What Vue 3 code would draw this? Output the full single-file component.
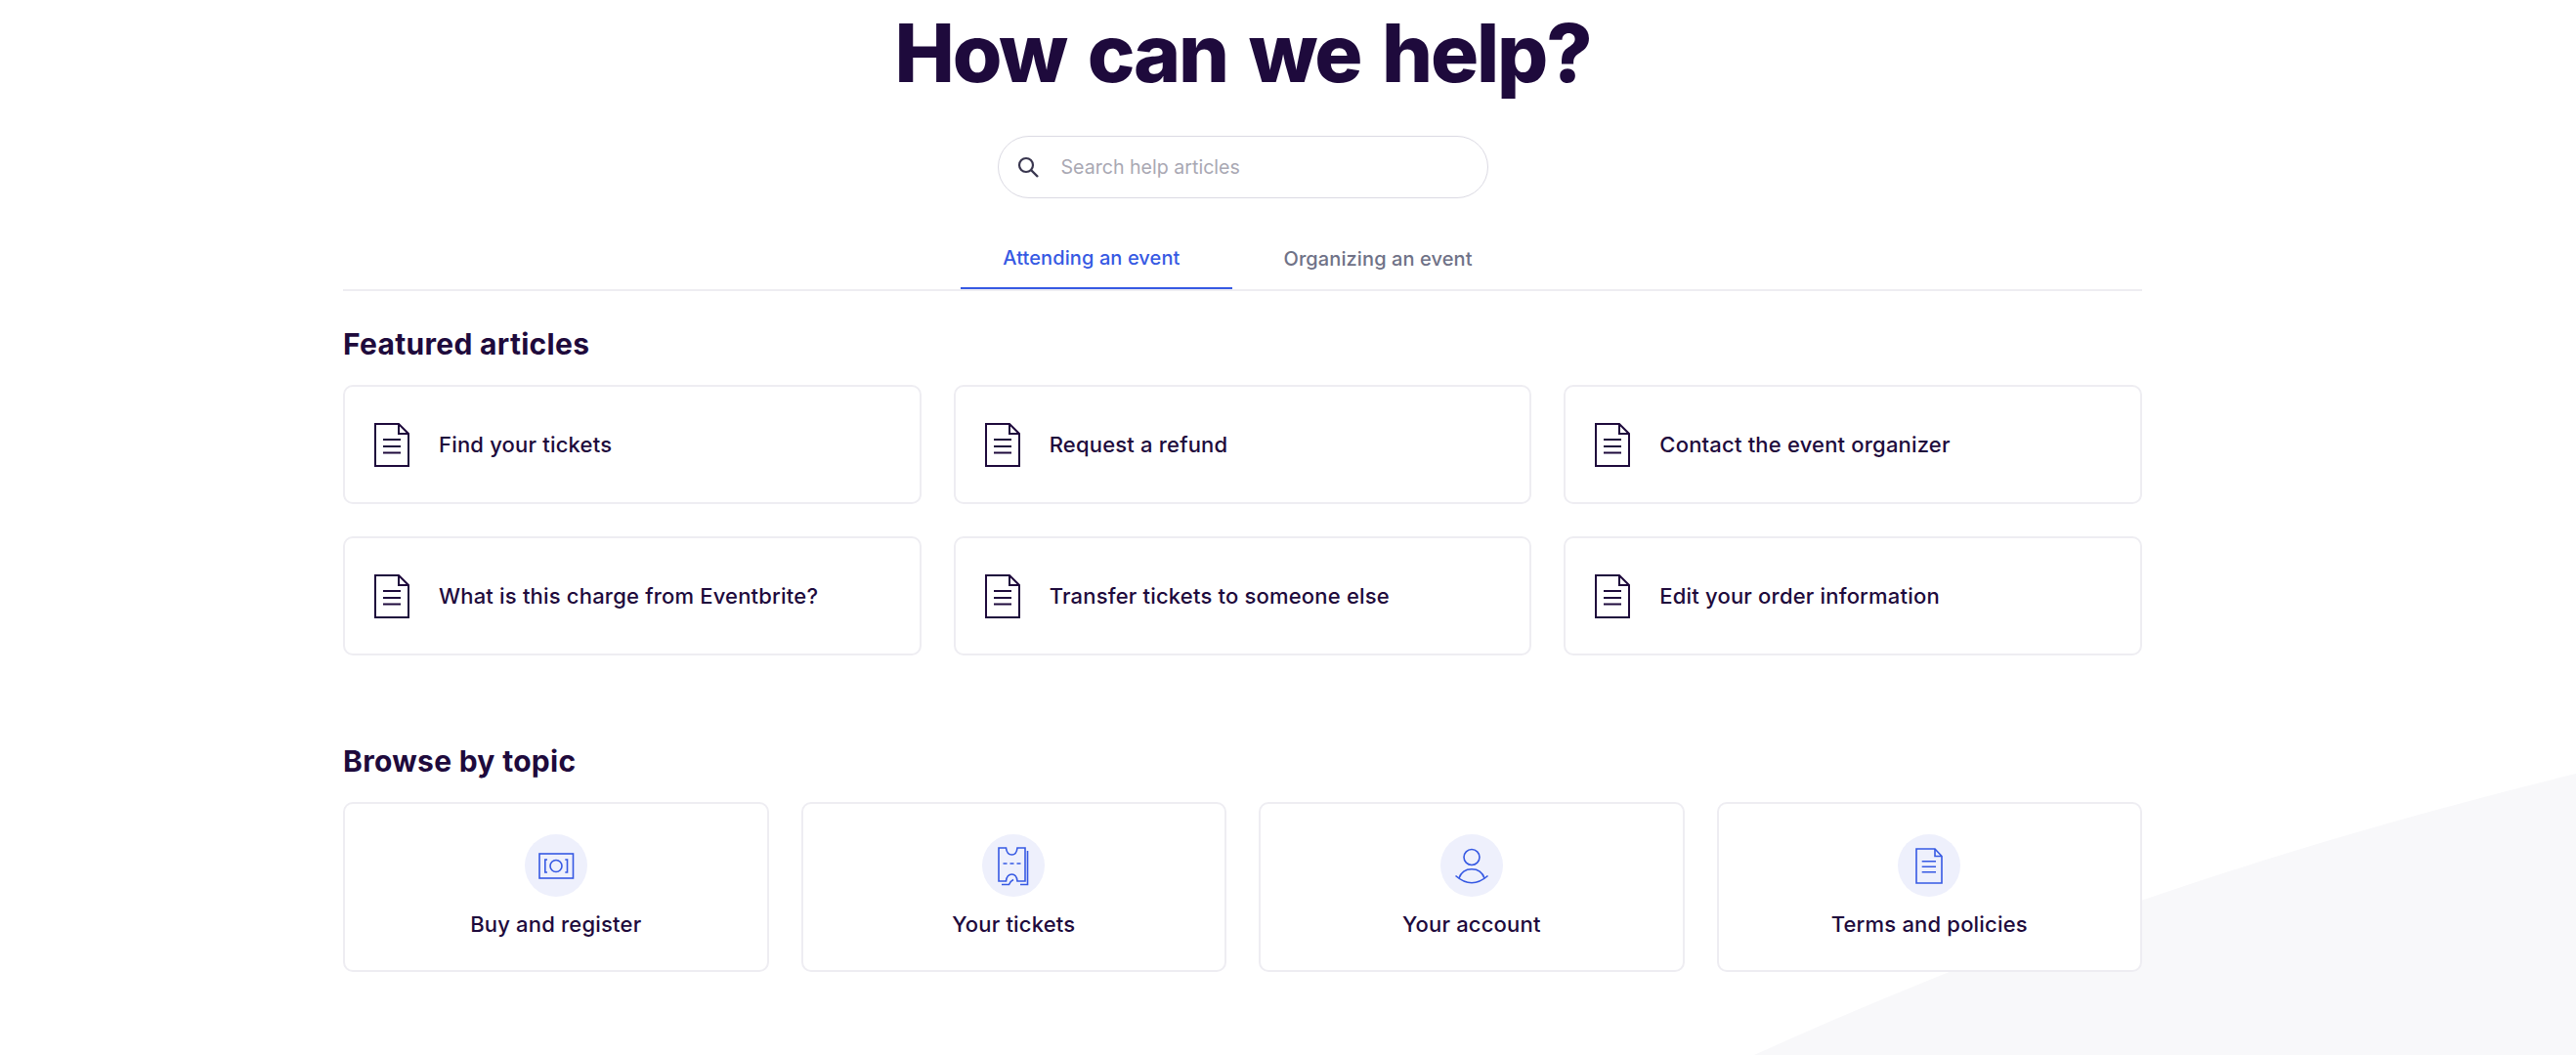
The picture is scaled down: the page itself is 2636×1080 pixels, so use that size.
<script setup>
const featured = [
  'Find your tickets',
  'Request a refund',
  'Contact the event organizer',
  'What is this charge from Eventbrite?',
  'Transfer tickets to someone else',
  'Edit your order information'
]

const topics = [
  { name: 'Buy and register', icon: 'buy' },
  { name: 'Your tickets', icon: 'ticket' },
  { name: 'Your account', icon: 'account' },
  { name: 'Terms and policies', icon: 'terms' }
]
</script>

<template>
  <div class="page">
    <svg class="backdrop" width="2636" height="1080" viewBox="0 0 2636 1080" aria-hidden="true">
      <path d="M1795 1080C2050 965 2300 875 2636 792V1080Z" fill="#f8f8fa" />
    </svg>

    <main class="content">
      <h1 class="title">How can we help?</h1>

      <div class="search">
        <svg class="search-icon" width="24" height="24" viewBox="0 0 24 24">
          <circle cx="10" cy="10" r="7" fill="none" stroke="#39364f" stroke-width="2.2" />
          <path d="M15 15l7 7" fill="none" stroke="#39364f" stroke-width="2.4" />
        </svg>
        <input class="search-input" type="text" placeholder="Search help articles" />
      </div>

      <nav class="tabs">
        <a class="tab tab-active">Attending an event</a>
        <a class="tab tab-second">Organizing an event</a>
      </nav>

      <h2 class="heading heading-featured">Featured articles</h2>
      <div class="featured-grid">
        <a v-for="item in featured" :key="item" class="card featured-card">
          <svg class="doc" width="36" height="45" viewBox="0 0 36 45" fill="none" stroke="#1e0a3c" stroke-width="2">
            <path d="M1 1H25L35 11V44H1Z" />
            <path d="M25 1V11H35" />
            <path d="M9 17H27M9 24H27M9 30.5H27" />
          </svg>
          <span class="card-label">{{ item }}</span>
        </a>
      </div>

      <h2 class="heading heading-browse">Browse by topic</h2>
      <div class="topic-grid">
        <a v-for="topic in topics" :key="topic.name" class="card topic-card">
          <svg class="topic-icon" width="64" height="64" viewBox="0 0 64 64" fill="none" stroke="#3659e3" stroke-width="1.6">
            <circle cx="32" cy="32" r="32" fill="#eef0fc" stroke="none" />
            <template v-if="topic.icon === 'buy'">
              <rect x="15" y="20" width="34.5" height="25" />
              <circle cx="32" cy="32.5" r="6" />
              <path d="M23 26H20.8V39H23M41.3 26H43.5V39H41.3" />
            </template>
            <template v-else-if="topic.icon === 'ticket'">
              <path d="M17 14H24.5C25 18.5 27.5 21 30.5 21C33 21 35.5 18.5 36 14H44V48H36C35.5 43.5 33 41 30.5 41C27.5 41 25 43.5 24.5 48H17Z" />
              <path d="M21.5 30H25.5M28.5 30H32.5M35.5 30H39.5" />
              <path d="M20 51.5H27.5C28.5 49 30 47.5 32 46.5M39 51.5H46.5V17" />
            </template>
            <template v-else-if="topic.icon === 'account'">
              <circle cx="32" cy="23.5" r="8" />
              <path d="M15.5 42.5Q32 57 48.5 42.5" />
              <path d="M19 45C21 39 26 35.7 32 35.7C38 35.7 43 39 45 45" />
            </template>
            <template v-else>
              <path d="M19 15H38L45 22.5V50H19Z" />
              <path d="M38 15V22.5H45" />
              <path d="M24.7 27.7H39M24.7 33.3H39M24.7 38.7H39" />
            </template>
          </svg>
          <span class="card-label">{{ topic.name }}</span>
        </a>
      </div>
    </main>
  </div>
</template>

<style scoped>
.page {
  position: relative;
  height: 1080px;
  overflow: hidden;
  background: #fff;
  color: #1e0a3c;
  font-family: Inter, "Liberation Sans", sans-serif;
}

.backdrop {
  position: absolute;
  top: 0;
  left: 0;
}

.content {
  position: relative;
  width: 1841px;
  margin-left: 351px;
}

.title {
  margin: 0;
  height: 112px;
  font-size: 82px;
  line-height: 110px;
  font-weight: 800;
  letter-spacing: -2.2px;
  word-spacing: 6px;
  text-align: center;
}

.search {
  display: flex;
  align-items: center;
  gap: 22px;
  width: 502px;
  height: 64px;
  margin: 27px auto 0;
  padding-left: 18px;
  box-sizing: border-box;
  border: 1px solid #dbdae3;
  border-radius: 32px;
  background: #fff;
}

.search-input {
  flex: 1;
  min-width: 0;
  padding: 0;
  border: none;
  outline: none;
  background: transparent;
  font-family: inherit;
  font-size: 19.6px;
  color: #1e0a3c;
}

.search-input::placeholder {
  color: #a9a8b3;
  opacity: 1;
}

.tabs {
  display: flex;
  justify-content: center;
  height: 64px;
  margin-top: 31px;
  border-bottom: 2px solid #eeedf2;
  box-sizing: border-box;
}

.tab {
  display: flex;
  align-items: center;
  height: 62px;
  padding: 0 54px 0 43px;
  box-sizing: border-box;
  font-size: 20px;
  font-weight: 500;
  letter-spacing: 0.1px;
  color: #6f7287;
}

.tab-second {
  padding: 0 53px 0 52px;
}

.tab-active {
  color: #3659e3;
  border-bottom: 2px solid #3659e3;
}

.heading {
  margin: 0;
  font-size: 30px;
  line-height: 40px;
  font-weight: 700;
  letter-spacing: 0.3px;
}

.heading-featured {
  margin-top: 34px;
  margin-bottom: 22px;
}

.heading-browse {
  margin-top: 88px;
  margin-bottom: 22px;
}

.card {
  box-sizing: border-box;
  border: 2px solid #eeedf2;
  border-radius: 10px;
  background: #fff;
}

.card-label {
  font-size: 22px;
  line-height: 30px;
  font-weight: 500;
  letter-spacing: 0.19px;
}

.featured-grid {
  display: grid;
  grid-template-columns: repeat(3, 1fr);
  gap: 33px;
}

.featured-card {
  display: flex;
  align-items: center;
  gap: 30px;
  height: 122px;
  padding-left: 30px;
}

.topic-grid {
  display: grid;
  grid-template-columns: repeat(4, 1fr);
  gap: 33px;
}

.topic-card {
  display: flex;
  flex-direction: column;
  align-items: center;
  height: 174px;
  padding-top: 31px;
}

.topic-icon {
  margin-bottom: 13px;
}
</style>
